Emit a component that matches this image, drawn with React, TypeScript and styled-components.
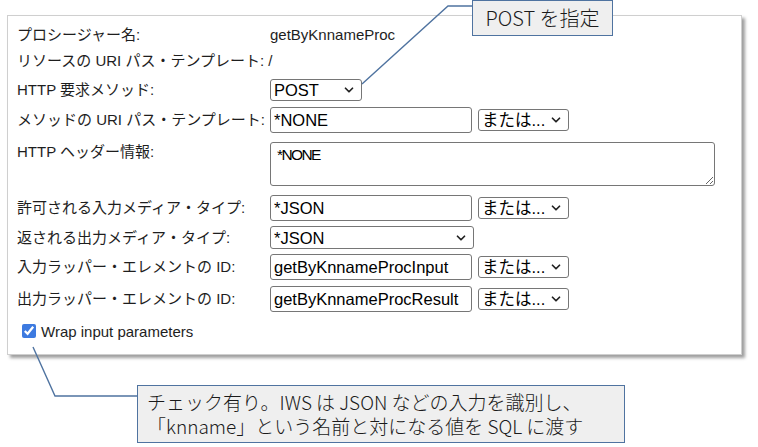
import React from 'react';
import styled, { createGlobalStyle } from 'styled-components';
import { ChevronDown } from 'lucide-react';

const GlobalStyle = createGlobalStyle`
  body {
    margin: 0;
    background: #ffffff;
  }
`;

const Stage = styled.div`
  position: relative;
  width: 758px;
  height: 447px;
  overflow: hidden;
  box-sizing: border-box;
  padding: 15px 0 0 7px;
  font-family: 'Liberation Sans', 'Noto Sans CJK JP', sans-serif;
  color: #1e1e1e;
`;

const Panel = styled.div`
  width: 735px;
  box-sizing: border-box;
  background: #ffffff;
  border: 1px solid #cfcfcf;
  box-shadow: 3px 3px 3px rgba(0, 0, 0, 0.38);
  padding: 0 0 14px 9px;
`;

const Row = styled.div<{ $h: number; $mt: number; $top?: boolean }>`
  display: grid;
  grid-template-columns: 253px 1fr;
  align-items: ${(p) => (p.$top ? 'start' : 'center')};
  height: ${(p) => p.$h}px;
  margin-top: ${(p) => p.$mt}px;
`;

const Label = styled.div`
  font-size: 15px;
  line-height: 20px;
  white-space: nowrap;
`;

const Value = styled.div`
  font-size: 15px;
  line-height: 20px;
`;

const Field = styled.div`
  display: flex;
  align-items: center;
  gap: 6px;
`;

const TextInput = styled.input`
  width: 202px;
  height: 26px;
  box-sizing: border-box;
  border: 1px solid #767676;
  border-radius: 3px;
  padding: 0 3px;
  font-family: 'Liberation Sans', 'Noto Sans CJK JP', sans-serif;
  font-size: 16.5px;
  color: #000;
  background: #fff;
  outline: none;
`;

const SelectWrap = styled.span<{ $w: number; $h: number }>`
  position: relative;
  display: inline-flex;
  width: ${(p) => p.$w}px;
  height: ${(p) => p.$h}px;

  select {
    appearance: none;
    width: 100%;
    height: 100%;
    box-sizing: border-box;
    border: 1px solid #767676;
    border-radius: 3px;
    background: #fff;
    padding: 0 20px 0 3px;
    font-family: 'Liberation Sans', 'Noto Sans CJK JP', sans-serif;
    font-size: 16.5px;
    color: #000;
    outline: none;
  }

  svg {
    position: absolute;
    right: 6px;
    top: 50%;
    transform: translateY(-50%);
    pointer-events: none;
  }
`;

const TextArea = styled.textarea`
  width: 445px;
  height: 44px;
  box-sizing: border-box;
  border: 1px solid #767676;
  border-radius: 3px;
  padding: 2px 6px;
  font-family: 'Liberation Sans', 'Noto Sans CJK JP', sans-serif;
  font-size: 15.5px;
  letter-spacing: -1.6px;
  line-height: 20px;
  color: #000;
  outline: none;
`;

const CheckRow = styled.label`
  display: flex;
  align-items: center;
  gap: 5px;
  margin-top: 10px;
  padding-left: 5px;
  height: 18px;
  font-size: 15px;

  input {
    margin: 0;
    width: 14px;
    height: 14px;
    accent-color: #3d7ae0;
  }
`;

const Leaders = styled.svg`
  position: absolute;
  left: 0;
  top: 0;
  pointer-events: none;
`;

const Callout = styled.div<{ $left: number; $top: number; $w: number; $h: number }>`
  position: absolute;
  left: ${(p) => p.$left}px;
  top: ${(p) => p.$top}px;
  width: ${(p) => p.$w}px;
  height: ${(p) => p.$h}px;
  box-sizing: border-box;
  background: #efefef;
  border: 1.5px solid #4f73a0;
  font-family: 'Noto Sans CJK JP', sans-serif;
  font-weight: 300;
  color: #1a1a1a;
`;

const CalloutTitle = styled.div`
  font-size: 20px;
  line-height: 34px;
  text-align: center;
`;

const CalloutText = styled.div`
  font-size: 19px;
  line-height: 24px;
  padding: 4px 0 0 9px;
  white-space: nowrap;
`;

function Dropdown({ w, h, value }: { w: number; h: number; value: string }) {
  return (
    <SelectWrap $w={w} $h={h}>
      <select defaultValue={value}>
        <option>{value}</option>
      </select>
      <ChevronDown size={14} strokeWidth={3} color="#222" />
    </SelectWrap>
  );
}

const OrSelect = () => <Dropdown w={91} h={22} value="または..." />;

export default function App() {
  return (
    <Stage>
      <GlobalStyle />
      <Panel>
        <Row $h={20} $mt={9}>
          <Label>プロシージャー名:</Label>
          <Value>getByKnnameProc</Value>
        </Row>
        <Row $h={20} $mt={6}>
          <Label>リソースの URI パス・テンプレート: /</Label>
        </Row>
        <Row $h={22} $mt={8}>
          <Label>HTTP 要求メソッド:</Label>
          <Field>
            <Dropdown w={92} h={22} value="POST" />
          </Field>
        </Row>
        <Row $h={26} $mt={6}>
          <Label>メソッドの URI パス・テンプレート:</Label>
          <Field>
            <TextInput defaultValue="*NONE" />
            <OrSelect />
          </Field>
        </Row>
        <Row $h={44} $mt={9} $top>
          <Label>HTTP ヘッダー情報:</Label>
          <TextArea defaultValue="*NONE" />
        </Row>
        <Row $h={26} $mt={9}>
          <Label>許可される入力メディア・タイプ:</Label>
          <Field>
            <TextInput defaultValue="*JSON" />
            <OrSelect />
          </Field>
        </Row>
        <Row $h={23} $mt={5}>
          <Label>返される出力メディア・タイプ:</Label>
          <Field>
            <Dropdown w={204} h={23} value="*JSON" />
          </Field>
        </Row>
        <Row $h={26} $mt={5}>
          <Label>入力ラッパー・エレメントの ID:</Label>
          <Field>
            <TextInput defaultValue="getByKnnameProcInput" />
            <OrSelect />
          </Field>
        </Row>
        <Row $h={26} $mt={6}>
          <Label>出力ラッパー・エレメントの ID:</Label>
          <Field>
            <TextInput defaultValue="getByKnnameProcResult" />
            <OrSelect />
          </Field>
        </Row>
        <CheckRow>
          <input type="checkbox" defaultChecked />
          Wrap input parameters
        </CheckRow>
      </Panel>

      <Leaders width={758} height={447}>
        <polyline points="472,6 448,6 362,84" fill="none" stroke="#4f73a0" strokeWidth={1.4} />
        <polyline points="33,347 55,396 137,396" fill="none" stroke="#4f73a0" strokeWidth={1.4} />
      </Leaders>

      <Callout $left={472} $top={0} $w={141} $h={36}>
        <CalloutTitle>POST を指定</CalloutTitle>
      </Callout>

      <Callout $left={137} $top={385} $w={488} $h={58}>
        <CalloutText>
          チェック有り。IWS は JSON などの入力を識別し、
          <br />
          「knname」という名前と対になる値を SQL に渡す
        </CalloutText>
      </Callout>
    </Stage>
  );
}
